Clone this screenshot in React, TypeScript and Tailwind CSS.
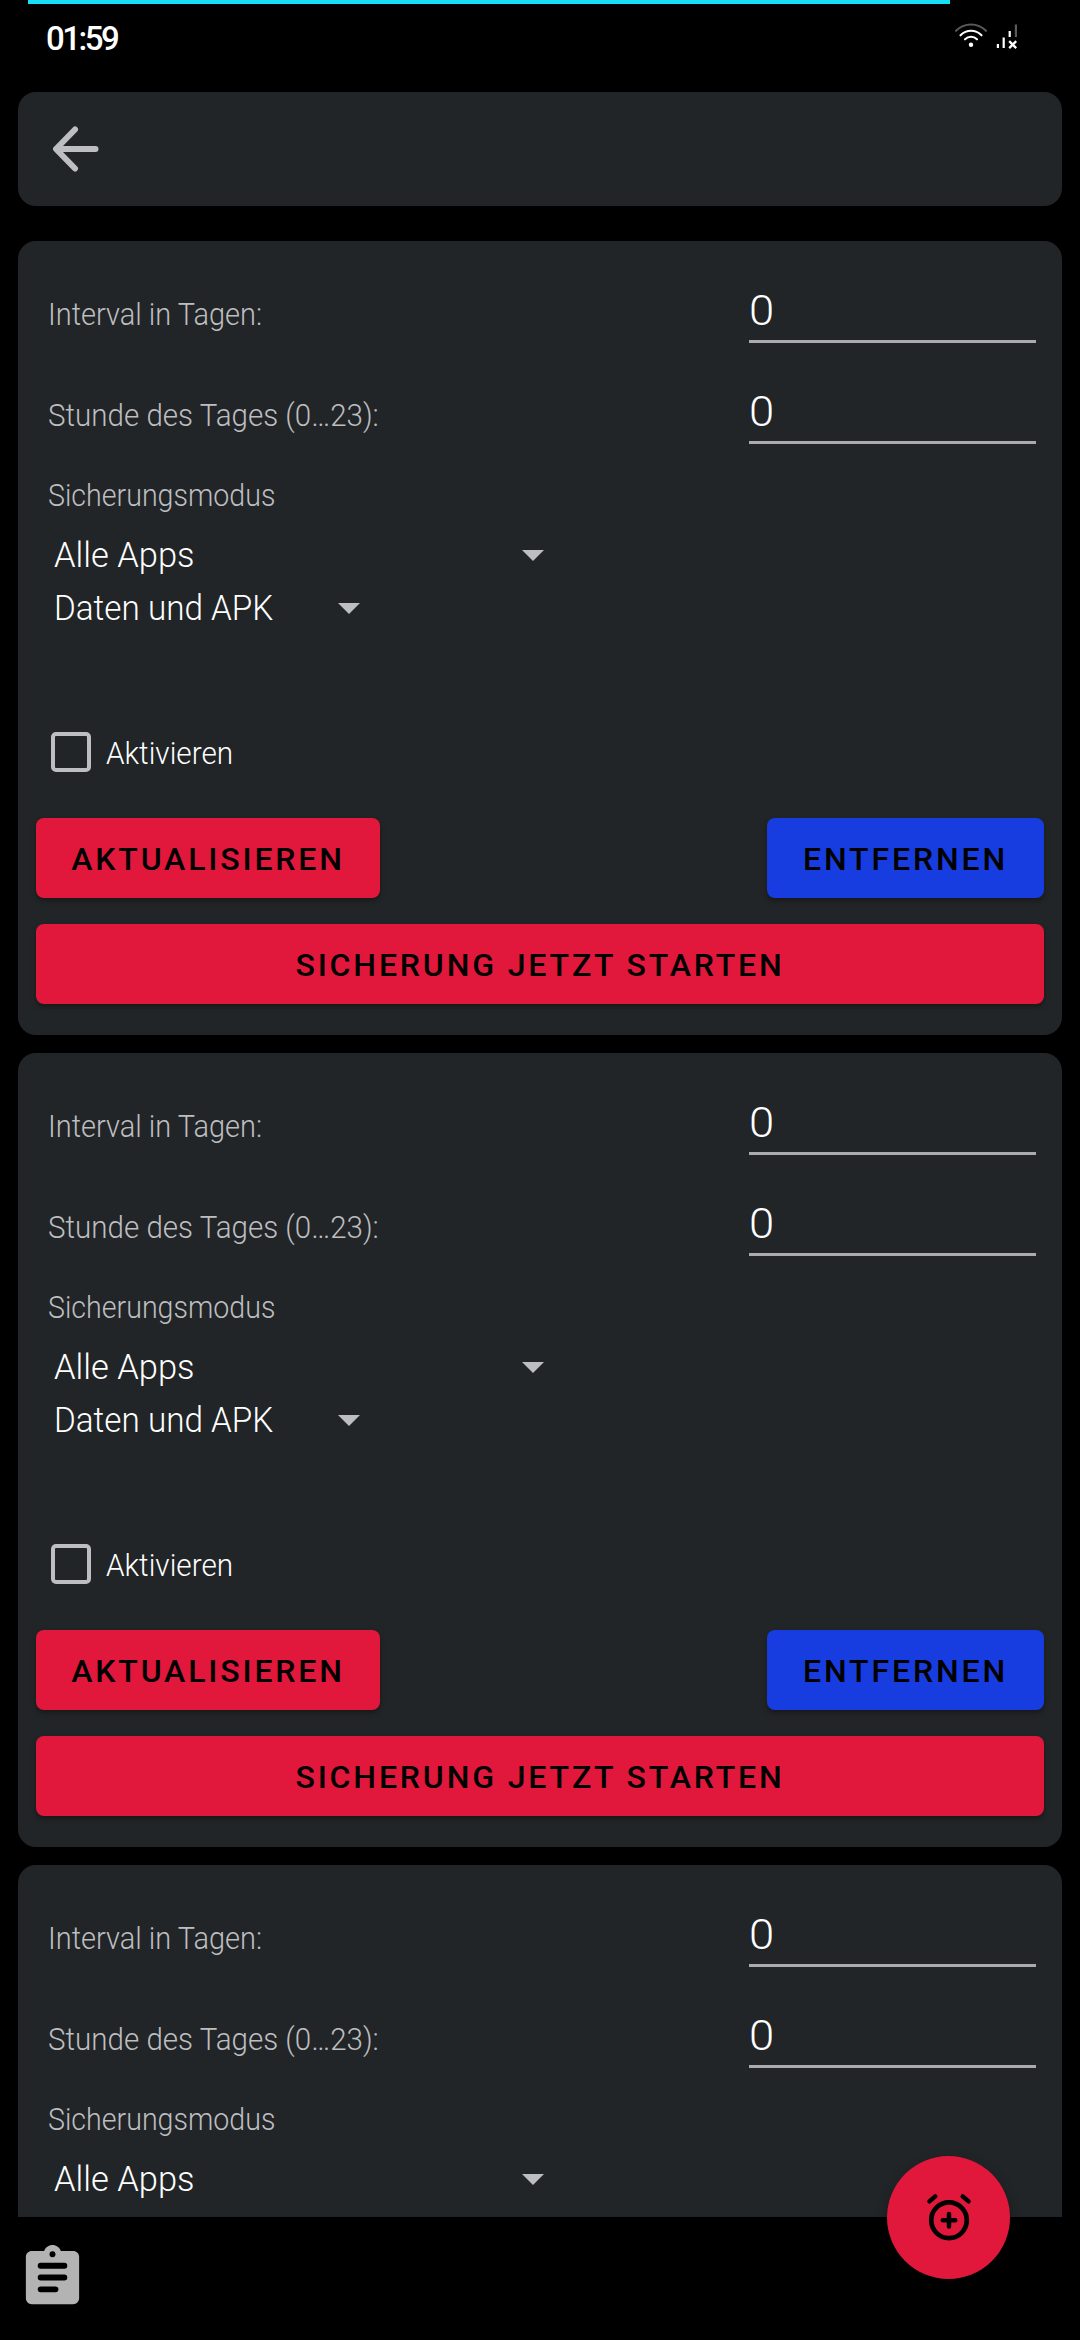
function BackIcon() {
  return (
    <svg className="h-[46px] w-[48px]" viewBox="0 0 48 46" fill="none" stroke="#bdbec0" strokeWidth="6" strokeLinecap="round" strokeLinejoin="round">
      <path d="M42.500 23H4M22 3.500L3 23l19 19.500" />
    </svg>
  );
}

function WifiIcon() {
  return (
    <svg className="h-[26px] w-[32px]" viewBox="0 0 32 26" fill="none" strokeWidth="2.1" strokeLinecap="round">
      <path d="M1 7.8C9.5 -0.6 22.500 -0.6 31 7.800" stroke="#5a5a5a" />
      <path d="M5.500 12.300C11.500 6.300 20.500 6.300 26.500 12.300" stroke="#fff" />
      <path d="M10 16.300C13.500 12.900 18.500 12.900 22 16.300" stroke="#fff" />
      <circle cx="16" cy="21.800" r="2.200" fill="#fff" />
    </svg>
  );
}

function SignalIcon() {
  return (
    <svg className="h-[26px] w-[22px]" viewBox="0 0 22 26" fill="none" strokeWidth="2.2">
      <path d="M1.900 21v4M7.700 14.500v10.500M13.700 8v6" stroke="#fff" />
      <path d="M19.900 1.500v12.500" stroke="#5a5a5a" />
      <path d="M13.200 18.100l7 7M20.200 18.100l-7 7" stroke="#fff" strokeWidth="2.300" />
    </svg>
  );
}

function Caret() {
  return (
    <svg className="mb-px h-[11px] w-[22px]" viewBox="0 0 22 11" fill="#bdbec0">
      <path d="M0 0h22L11 11z" />
    </svg>
  );
}

function AlarmAddIcon() {
  return (
    <svg className="h-[54px] w-[54px]" viewBox="0 0 24 24" fill="none" stroke="#000" strokeWidth="2" strokeLinecap="round">
      <circle cx="12" cy="13" r="7.900" strokeWidth="2.100" />
      <path d="M12 10.200v5.600M9.200 13h5.600M3.300 4.600L5.900 2.400M20.700 4.600L18.100 2.400" />
    </svg>
  );
}

function ClipboardIcon() {
  return (
    <svg className="h-[71px] w-[71px]" viewBox="0 0 24 24" fill="#b3b3b3">
      <path d="M19 3h-4.180C14.400 1.840 13.300 1 12 1s-2.400.84-2.820 2H5c-1.100 0-2 .9-2 2v14c0 1.100.9 2 2 2h14c1.100 0 2-.9 2-2V5c0-1.100-.9-2-2-2z" />
      <circle cx="12" cy="4.150" r="1" fill="#000" />
      <path d="M8 8h8M8 12h8M8 16h5" stroke="#000" strokeWidth="2" strokeLinecap="round" />
    </svg>
  );
}

function NumberRow({ label, value, labelClass }: { label: string; value: string; labelClass: string }) {
  return (
    <div className="flex h-[101px] items-start justify-between pr-[26px] pl-[30px]">
      <span className={`origin-left pt-[26px] text-[31px] leading-[40px] text-[#bdbec0] ${labelClass}`}>{label}</span>
      <div className="mt-[18px] h-[56px] w-[287px] border-b-[3px] border-[#a9abac] text-[42px] leading-[48px] text-white">
        <span className="inline-block origin-left scale-x-[1.08]">{value}</span>
      </div>
    </div>
  );
}

function Spinner({ value, width, textClass }: { value: string; width: string; textClass: string }) {
  return (
    <div className={`ml-[36px] flex h-[53px] items-center justify-between ${width}`}>
      <span className={`origin-left text-[35px] leading-[53px] whitespace-nowrap text-white ${textClass}`}>{value}</span>
      <Caret />
    </div>
  );
}

const button =
  'flex h-[80px] items-center justify-center rounded-[8px] pt-[2px] text-[32px] font-medium tracking-[2.86px] text-black shadow-[0_3px_5px_rgba(0,0,0,0.35)]';

function ScheduleCard() {
  return (
    <section className="flex h-[794px] shrink-0 flex-col rounded-[18px] bg-[#222527] pt-[28px]">
      <NumberRow label="Interval in Tagen:" value="0" labelClass="scale-x-[0.935]" />
      <NumberRow label="Stunde des Tages (0…23):" value="0" labelClass="scale-x-[0.953]" />
      <div className="mt-[5px] ml-[30px] origin-left scale-x-[0.922] text-[31px] leading-[40px] text-[#bdbec0]">Sicherungsmodus</div>
      <div className="mt-[13px]">
        <Spinner value="Alle Apps" width="w-[490px]" textClass="scale-x-[0.985]" />
        <Spinner value="Daten und APK" width="w-[306px]" textClass="scale-x-[0.95]" />
      </div>
      <label className="mt-[97px] flex h-[40px] items-center pl-[33px]">
        <span className="h-[40px] w-[40px] rounded-[5px] border-[4.500px] border-[#bdbec0]" />
        <span className="ml-[15px] origin-left scale-x-[0.958] pt-[3px] text-[31px] leading-[40px] text-white">Aktivieren</span>
      </label>
      <div className="mt-[46px] flex flex-col gap-[26px] px-[18px]">
        <div className="flex justify-between">
          <button className={`${button} w-[344px] bg-[#e1183c]`}>AKTUALISIEREN</button>
          <button className={`${button} w-[277px] bg-[#173de0]`}>ENTFERNEN</button>
        </div>
        <button className={`${button} w-full bg-[#e1183c]`}>SICHERUNG JETZT STARTEN</button>
      </div>
    </section>
  );
}

export default function App() {
  return (
    <div className="relative flex h-[2340px] w-[1080px] flex-col overflow-hidden bg-black font-['Roboto',sans-serif] font-light">
      <div className="ml-[28px] h-[4px] w-[922px] shrink-0 bg-[#18dff5]" />
      <header className="flex h-[88px] shrink-0 items-start justify-between pr-[62px] pl-[46px]">
        <span className="pt-[15px] text-[33px] leading-[40px] font-medium tracking-[-2.500px] text-white">01:59</span>
        <div className="flex gap-[9px] pt-[19px]">
          <WifiIcon />
          <SignalIcon />
        </div>
      </header>
      <nav className="mx-[18px] flex h-[114px] shrink-0 items-center rounded-[18px] bg-[#222527] pl-[35px]">
        <BackIcon />
      </nav>
      <main className="mx-[18px] mt-[35px] flex h-[1976px] shrink-0 flex-col gap-[18px] overflow-hidden">
        <ScheduleCard />
        <ScheduleCard />
        <ScheduleCard />
      </main>
      <footer className="flex h-[123px] shrink-0 pt-[25px] pl-[17px]">
        <ClipboardIcon />
      </footer>
      <button className="absolute top-[2156px] left-[887px] flex h-[123px] w-[123px] items-center justify-center rounded-full bg-[#e1183c] shadow-[0_5px_12px_rgba(0,0,0,0.35)]">
        <AlarmAddIcon />
      </button>
    </div>
  );
}
